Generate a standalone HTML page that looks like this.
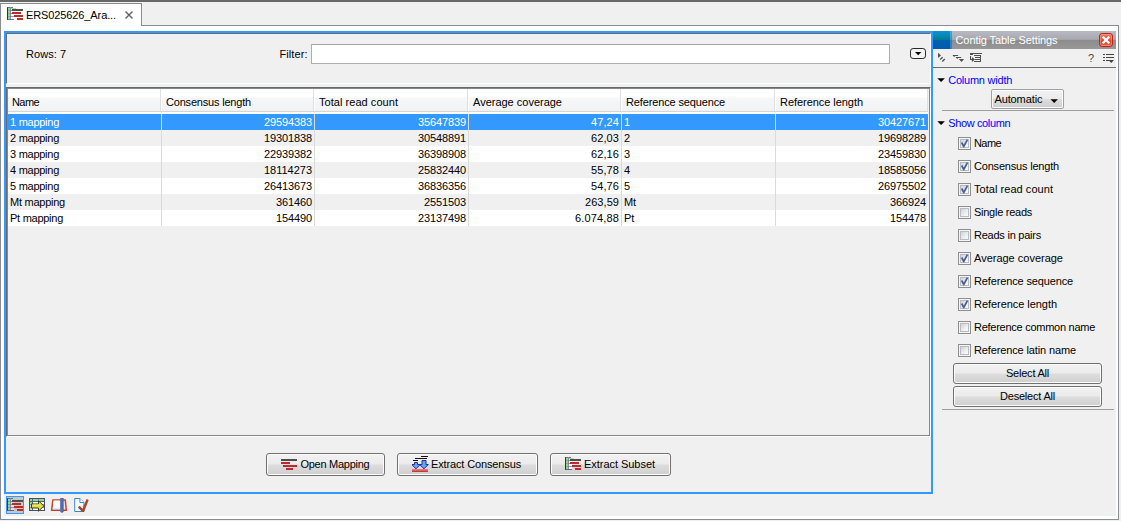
<!DOCTYPE html>
<html>
<head>
<meta charset="utf-8">
<title>Contig Table</title>
<style>
html,body{margin:0;padding:0;}
body{width:1121px;height:521px;overflow:hidden;background:#f0f0f0;font-family:"Liberation Sans",sans-serif;font-size:11px;color:#000;position:relative;}
.a{position:absolute;}
.t{position:absolute;white-space:pre;line-height:13px;height:13px;letter-spacing:-0.2px;}
#topbar{left:0;top:0;width:1121px;height:2px;background:#696969;}
#content{left:0;top:25px;width:1119px;height:495px;background:#fff;border:1px solid #898c95;box-sizing:border-box;}
#tab{left:0;top:3px;width:142px;height:23px;background:#fff;border:1px solid #898c95;border-bottom:none;box-sizing:border-box;}
#main{left:4px;top:31px;width:929px;height:463px;border:2px solid #3399ff;box-sizing:border-box;background:#f0f0f0;}
#tool{left:4px;top:494px;width:1112px;height:22px;background:#f0f0f0;}
#side{left:933px;top:31px;width:183px;height:463px;background:#f0f0f0;}
#toppanel{left:6px;top:33px;width:925px;height:51px;box-sizing:border-box;border-left:1px solid #696969;border-top:1px solid #696969;border-right:1px solid #fff;border-bottom:1px solid #fff;}
#filter{left:311px;top:44px;width:579px;height:20px;box-sizing:border-box;border:1px solid #abadb3;border-top-color:#a0a3aa;background:#fff;}
#tbl{left:6px;top:87px;width:925px;height:350px;box-sizing:border-box;border-left:1px solid #696969;border-top:1px solid #696969;border-right:1px solid #fff;border-bottom:1px solid #fff;background:#f0f0f0;}
#tbl2{left:7px;top:88px;width:923px;height:348px;box-sizing:border-box;border:1px solid #828790;}
#hdr{left:8px;top:89px;width:920px;height:25px;background:linear-gradient(#fff 0,#fff 8px,#f6f7f9 9px,#f2f3f5 21px,#f0f0f0 22px,#d5d5d5 22px,#d5d5d5 23px,#fff 23px,#fff 25px);}
.hs{position:absolute;top:89px;width:2px;height:22px;background:linear-gradient(90deg,#dedfe1 0,#dedfe1 1px,#fff 1px);}
.row{position:absolute;left:8px;width:920px;height:16px;background:#fff;}
.row.alt{background:#f0f0f0;}
.row.sel{background:#3399ff;color:#fff;}
.c{position:absolute;top:2px;line-height:13px;white-space:pre;letter-spacing:-0.15px;}
.r{text-align:right;}
.vs{position:absolute;top:114px;width:1px;height:112px;background:#dadada;}
.btn{position:absolute;box-sizing:border-box;border:1px solid #707070;border-radius:3px;background:linear-gradient(#f2f2f2 0,#ebebeb 48%,#dddddd 52%,#cfcfcf 100%);box-shadow:inset 0 0 0 1px #fcfcfc;}
.cb{position:absolute;left:958px;width:13px;height:13px;box-sizing:border-box;border:1px solid #8e8f8f;background:#f4f4f4;}
.cb i{position:absolute;left:1px;top:1px;width:9px;height:9px;border:1px solid #b8bcc2;box-sizing:border-box;background:linear-gradient(135deg,#cfd3d8,#f3f3f3 70%,#fafafa);}
.cb svg{position:absolute;left:0;top:0;}
.blue{color:#0000ff;}
</style>
</head>
<body>
<div class="a" id="topbar"></div>
<div class="a" id="content"></div>
<div class="a" id="tab"></div>
<svg class="a" style="left:7px;top:6px" width="16" height="16" viewBox="0 0 16 16" shape-rendering="crispEdges">
<rect x="1" y="2" width="6" height="11" fill="#fff" opacity="0.9"/>
<rect x="0" y="1" width="1" height="13" fill="#2c2c6c"/><rect x="0" y="1" width="6" height="1" fill="#4a4a88" opacity="0.8"/>
<rect x="3" y="1" width="1" height="13" fill="#8c8cb8"/>
<rect x="1" y="4" width="6" height="1" fill="#6a6a9c" opacity="0.7"/><rect x="1" y="7" width="6" height="1" fill="#6a6a9c" opacity="0.7"/><rect x="1" y="10" width="6" height="1" fill="#6a6a9c" opacity="0.7"/><rect x="0" y="13" width="7" height="1" fill="#4a4a88" opacity="0.8"/>
<rect x="1" y="2" width="2" height="2" fill="#86e660"/><rect x="1" y="5" width="2" height="2" fill="#86e660"/><rect x="1" y="8" width="2" height="2" fill="#86e660"/><rect x="1" y="11" width="2" height="2" fill="#86e660"/>
<rect x="4" y="2" width="5" height="1" fill="#9be87c"/>
<rect x="5" y="3" width="11" height="2" fill="#4d4d4d"/>
<rect x="5" y="6" width="9" height="2" fill="#bc2a2e"/>
<rect x="7" y="9" width="9" height="2" fill="#bc2a2e"/>
<rect x="10" y="12" width="6" height="2" fill="#bc2a2e"/>
</svg>
<div class="t" style="left:26px;top:9px;letter-spacing:-0.108px">ERS025626_Ara...</div>
<svg class="a" style="left:124px;top:10px" width="10" height="10" viewBox="0 0 10 10"><path d="M1.5 1.5L8.5 8.5M8.5 1.5L1.5 8.5" stroke="#606060" stroke-width="1.4" fill="none"/></svg>

<div class="a" id="main"></div>
<div class="a" id="side"></div>
<div class="a" id="tool"></div>

<div class="a" id="toppanel"></div>
<div class="t" style="left:26px;top:48px;letter-spacing:0.064px">Rows: 7</div>
<div class="t" style="left:279.4px;top:48px;letter-spacing:0.114px">Filter:</div>
<div class="a" id="filter"></div>
<svg class="a" style="left:909px;top:47px" width="18" height="13" viewBox="0 0 18 13"><rect x="1.5" y="1.5" width="15" height="10" rx="2.6" ry="2.6" fill="#f3f3f3" stroke="#2a2a2a" stroke-width="1"/><path d="M6 5h6.4l-3.2 3.2z" fill="#000"/></svg>

<div class="a" id="tbl"></div>
<div class="a" id="tbl2"></div>
<div class="a" id="hdr"></div>
<div class="hs" style="left:160px"></div>
<div class="hs" style="left:313px"></div>
<div class="hs" style="left:467px"></div>
<div class="hs" style="left:620px"></div>
<div class="hs" style="left:774px"></div>
<div class="hs" style="left:927px;width:1px"></div>
<div class="t" style="left:12px;top:96px;letter-spacing:-0.586px">Name</div>
<div class="t" style="left:166px;top:96px;letter-spacing:-0.191px">Consensus length</div>
<div class="t" style="left:319px;top:96px;letter-spacing:0.045px">Total read count</div>
<div class="t" style="left:473px;top:96px;letter-spacing:-0.006px">Average coverage</div>
<div class="t" style="left:626px;top:96px;letter-spacing:-0.14px">Reference sequence</div>
<div class="t" style="left:780px;top:96px;letter-spacing:-0.049px">Reference length</div>
<div class="row sel" style="top:114px"><span class="c" style="left:2px;letter-spacing:-0.264px">1 mapping</span><span class="c r" style="right:616px;letter-spacing:-0.119px">29594383</span><span class="c r" style="right:462px;letter-spacing:-0.119px">35647839</span><span class="c r" style="right:309px;letter-spacing:0.094px">47,24</span><span class="c" style="left:616px;letter-spacing:-0.125px">1</span><span class="c r" style="right:2px;letter-spacing:-0.119px">30427671</span></div>
<div class="row alt" style="top:130px"><span class="c" style="left:2px;letter-spacing:-0.264px">2 mapping</span><span class="c r" style="right:616px;letter-spacing:-0.119px">19301838</span><span class="c r" style="right:462px;letter-spacing:-0.119px">30548891</span><span class="c r" style="right:309px;letter-spacing:0.094px">62,03</span><span class="c" style="left:616px;letter-spacing:-0.125px">2</span><span class="c r" style="right:2px;letter-spacing:-0.119px">19698289</span></div>
<div class="row" style="top:146px"><span class="c" style="left:2px;letter-spacing:-0.264px">3 mapping</span><span class="c r" style="right:616px;letter-spacing:-0.119px">22939382</span><span class="c r" style="right:462px;letter-spacing:-0.119px">36398908</span><span class="c r" style="right:309px;letter-spacing:0.094px">62,16</span><span class="c" style="left:616px;letter-spacing:-0.125px">3</span><span class="c r" style="right:2px;letter-spacing:-0.119px">23459830</span></div>
<div class="row alt" style="top:162px"><span class="c" style="left:2px;letter-spacing:-0.264px">4 mapping</span><span class="c r" style="right:616px;letter-spacing:-0.016px">18114273</span><span class="c r" style="right:462px;letter-spacing:-0.119px">25832440</span><span class="c r" style="right:309px;letter-spacing:0.094px">55,78</span><span class="c" style="left:616px;letter-spacing:-0.125px">4</span><span class="c r" style="right:2px;letter-spacing:-0.119px">18585056</span></div>
<div class="row" style="top:178px"><span class="c" style="left:2px;letter-spacing:-0.264px">5 mapping</span><span class="c r" style="right:616px;letter-spacing:-0.119px">26413673</span><span class="c r" style="right:462px;letter-spacing:-0.119px">36836356</span><span class="c r" style="right:309px;letter-spacing:0.094px">54,76</span><span class="c" style="left:616px;letter-spacing:-0.125px">5</span><span class="c r" style="right:2px;letter-spacing:-0.119px">26975502</span></div>
<div class="row alt" style="top:194px"><span class="c" style="left:2px;letter-spacing:-0.248px">Mt mapping</span><span class="c r" style="right:616px;letter-spacing:-0.12px">361460</span><span class="c r" style="right:462px;letter-spacing:-0.118px">2551503</span><span class="c r" style="right:309px;letter-spacing:0.057px">263,59</span><span class="c" style="left:616px;letter-spacing:-0.117px">Mt</span><span class="c r" style="right:2px;letter-spacing:-0.12px">366924</span></div>
<div class="row" style="top:210px"><span class="c" style="left:2px;letter-spacing:-0.266px">Pt mapping</span><span class="c r" style="right:616px;letter-spacing:-0.12px">154490</span><span class="c r" style="right:462px;letter-spacing:-0.119px">23137498</span><span class="c r" style="right:309px;letter-spacing:0.146px">6.074,88</span><span class="c" style="left:616px;letter-spacing:-0.203px">Pt</span><span class="c r" style="right:2px;letter-spacing:-0.12px">154478</span></div>
<div class="vs" style="left:161px"></div>
<div class="vs" style="left:314px"></div>
<div class="vs" style="left:468px"></div>
<div class="vs" style="left:621px"></div>
<div class="vs" style="left:775px"></div>
<div class="btn" style="left:266px;top:453px;width:119px;height:23px"></div>
<div class="btn" style="left:397px;top:453px;width:141px;height:23px"></div>
<div class="btn" style="left:550px;top:453px;width:121px;height:23px"></div>
<div class="t" style="left:300.4px;top:458px;letter-spacing:-0.264px">Open Mapping</div>
<div class="t" style="left:431px;top:458px;letter-spacing:-0.137px">Extract Consensus</div>
<div class="t" style="left:584px;top:458px;letter-spacing:-0.039px">Extract Subset</div>
<svg class="a" style="left:281px;top:456px" width="16" height="16" viewBox="0 0 16 16" shape-rendering="crispEdges">
<rect x="0" y="3" width="16" height="2" fill="#4d4d4d"/><rect x="0" y="6" width="9" height="2" fill="#bc2a2e"/><rect x="2" y="9" width="14" height="2" fill="#bc2a2e"/><rect x="5" y="12" width="7" height="2" fill="#bc2a2e"/>
</svg>
<svg class="a" style="left:412px;top:455px" width="17" height="17" viewBox="0 0 17 17">
<g shape-rendering="crispEdges"><rect x="9" y="1" width="7" height="1" fill="#111"/><rect x="3" y="3" width="12" height="1" fill="#111"/><rect x="1" y="5" width="5" height="1" fill="#111"/>
<rect x="0" y="14" width="16" height="1" fill="#f07878"/><rect x="0" y="15" width="16" height="1" fill="#e05a5a"/><rect x="0" y="16" width="16" height="1" fill="#b84040"/></g>
<path d="M2.5 7.5h3v2h2.8l-4.3 4.3l-4.3-4.3h2.8z" fill="#5aa8f8" stroke="#2a2a98" stroke-width="1"/>
<path d="M10 5.5h4v4h2.3l-4.3 4.3l-4.3-4.3h2.3z" fill="#5aa8f8" stroke="#2a2a98" stroke-width="1"/>
</svg>
<svg class="a" style="left:565px;top:456px" width="16" height="16" viewBox="0 0 16 16" shape-rendering="crispEdges">
<rect x="1" y="2" width="6" height="11" fill="#fff" opacity="0.9"/>
<rect x="0" y="1" width="1" height="13" fill="#2c2c6c"/><rect x="0" y="1" width="6" height="1" fill="#4a4a88" opacity="0.8"/>
<rect x="3" y="1" width="1" height="13" fill="#8c8cb8"/>
<rect x="1" y="4" width="6" height="1" fill="#6a6a9c" opacity="0.7"/><rect x="1" y="7" width="6" height="1" fill="#6a6a9c" opacity="0.7"/><rect x="1" y="10" width="6" height="1" fill="#6a6a9c" opacity="0.7"/><rect x="0" y="13" width="7" height="1" fill="#4a4a88" opacity="0.8"/>
<rect x="1" y="2" width="2" height="2" fill="#86e660"/><rect x="1" y="5" width="2" height="2" fill="#86e660"/><rect x="1" y="8" width="2" height="2" fill="#86e660"/><rect x="1" y="11" width="2" height="2" fill="#86e660"/>
<rect x="4" y="2" width="5" height="1" fill="#9be87c"/>
<rect x="5" y="3" width="11" height="2" fill="#4d4d4d"/>
<rect x="5" y="6" width="9" height="2" fill="#bc2a2e"/>
<rect x="7" y="9" width="9" height="2" fill="#bc2a2e"/>
<rect x="10" y="12" width="6" height="2" fill="#bc2a2e"/>
</svg>
<div class="a" style="left:933px;top:31px;width:17px;height:18px;background:linear-gradient(#0a94d6 0,#0488b4 5px,#007c88 9px,#0060b2 9px,#005cac 18px)"></div>
<div class="a" style="left:950px;top:31px;width:1px;height:18px;background:linear-gradient(#48b0ec 0,#30a0c8 9px,#3088d8 9px,#2a80d0 18px)"></div>
<div class="a" style="left:951px;top:31px;width:165px;height:18px;background:linear-gradient(#babac6 0,#a8a8ae 8px,#a0a0a4 9px,#8c8c8c 9px,#989898 18px)"></div>
<div class="a" style="left:951px;top:31px;width:1px;height:18px;background:linear-gradient(#8a8a92 0,#7c7c80 9px,#6c6c6c 9px,#747474 18px)"></div>
<div class="t" style="left:955.5px;top:34px;color:#fff;letter-spacing:-0.084px">Contig Table Settings</div>
<div class="a" style="left:1099px;top:33px;width:14px;height:14px;border-radius:3px;background:linear-gradient(#ec7c6a 0,#e4513e 6px,#dc3a28 7px,#ea6450 12px);box-sizing:border-box;border:1px solid #c02414;box-shadow:inset 0 0 0 1px rgba(255,170,150,0.55)"></div>
<svg class="a" style="left:1101px;top:35px" width="10" height="10" viewBox="0 0 10 10"><path d="M1.7 1.7L8.3 8.3M8.3 1.7L1.7 8.3" stroke="#fff" stroke-width="2.3" fill="none"/></svg>
<div class="a" style="left:933px;top:67px;width:183px;height:1px;background:#6e6e6e"></div>
<svg class="a" style="left:936px;top:51px" width="50" height="14" viewBox="0 0 50 14">
<g fill="#505050">
<path d="M2 1.8v5.1l3-2.5z"/>
<path d="M16.8 4h5.3v1h-3l-0.9 1.1l-0.9-1.1h-0.5z"/><path d="M19.9 6h5.3v1h-3l-0.9 1.1l-0.9-1.1h-0.5z"/><path d="M22.9 8.1h5.2l-2.6 2.9z"/>
</g>
<g stroke="#505050" stroke-width="1.35" fill="none"><path d="M4.2 8.6l2.4-2.4"/><path d="M6.3 10.6l2.5-2.5"/></g>
<g fill="#505050" shape-rendering="crispEdges"><rect x="34" y="2" width="12" height="1"/><rect x="34" y="3" width="3" height="1"/><rect x="38" y="4" width="7" height="1"/><rect x="39" y="6" width="6" height="1"/><rect x="39" y="8" width="6" height="1"/><rect x="38" y="10" width="7" height="1"/><rect x="44" y="4" width="1" height="7"/><rect x="34" y="5" width="1" height="4"/><rect x="34" y="8" width="3" height="1"/></g>
<path d="M35.9 6v5l3.1-2.5z" fill="#505050"/>
</svg>
<div class="t" style="left:1088px;top:52px;color:#484848;font-size:11px;letter-spacing:0px">?</div>
<svg class="a" style="left:1103px;top:53px" width="12" height="11" viewBox="0 0 12 11" shape-rendering="crispEdges">
<g fill="#444"><rect x="0" y="1" width="2" height="1"/><rect x="3" y="1" width="8" height="1"/><rect x="0" y="4" width="2" height="1"/><rect x="3" y="4" width="8" height="1"/><rect x="0" y="7" width="2" height="1"/><rect x="3" y="7" width="3" height="1"/></g>
<path d="M5.5 7h5.5l-2.75 3z" fill="#444" shape-rendering="auto"/>
</svg>

<svg class="a" style="left:937px;top:77px" width="9" height="6"><path d="M0.3 1.2h7.6l-3.8 3.8z" fill="#000"/></svg>
<div class="t blue" style="left:948.2px;top:74px;letter-spacing:-0.22px">Column width</div>
<div class="btn" style="left:991px;top:89px;width:73px;height:20px;border-color:#a0a0a8;border-radius:2px"></div>
<div class="t" style="left:994.4px;top:93px;letter-spacing:-0.102px">Automatic</div>
<svg class="a" style="left:1050px;top:99px" width="9" height="5"><path d="M0.5 0.3h7.4l-3.7 3.7z" fill="#000"/></svg>
<div class="a" style="left:942px;top:110px;width:172px;height:1px;background:#a0a0a0"></div>
<svg class="a" style="left:937px;top:120px" width="9" height="6"><path d="M0.3 1.2h7.6l-3.8 3.8z" fill="#000"/></svg>
<div class="t blue" style="left:948.2px;top:117px;letter-spacing:-0.368px">Show column</div>

<div class="cb" style="top:137px"><i></i><svg width="11" height="11" viewBox="0 0 11 11"><path d="M1.9 4.9l1.5-0.9l1.4 2.5l2.9-5.3l1.5 0.7l-4 7.6h-0.9z" fill="#4a5f97"/></svg></div><div class="t" style="left:974px;top:137px;letter-spacing:-0.586px">Name</div>
<div class="cb" style="top:160px"><i></i><svg width="11" height="11" viewBox="0 0 11 11"><path d="M1.9 4.9l1.5-0.9l1.4 2.5l2.9-5.3l1.5 0.7l-4 7.6h-0.9z" fill="#4a5f97"/></svg></div><div class="t" style="left:974px;top:160px;letter-spacing:-0.191px">Consensus length</div>
<div class="cb" style="top:183px"><i></i><svg width="11" height="11" viewBox="0 0 11 11"><path d="M1.9 4.9l1.5-0.9l1.4 2.5l2.9-5.3l1.5 0.7l-4 7.6h-0.9z" fill="#4a5f97"/></svg></div><div class="t" style="left:974px;top:183px;letter-spacing:0.045px">Total read count</div>
<div class="cb" style="top:206px"><i></i></div><div class="t" style="left:974px;top:206px;letter-spacing:-0.263px">Single reads</div>
<div class="cb" style="top:229px"><i></i></div><div class="t" style="left:974px;top:229px;letter-spacing:-0.238px">Reads in pairs</div>
<div class="cb" style="top:252px"><i></i><svg width="11" height="11" viewBox="0 0 11 11"><path d="M1.9 4.9l1.5-0.9l1.4 2.5l2.9-5.3l1.5 0.7l-4 7.6h-0.9z" fill="#4a5f97"/></svg></div><div class="t" style="left:974px;top:252px;letter-spacing:-0.006px">Average coverage</div>
<div class="cb" style="top:275px"><i></i><svg width="11" height="11" viewBox="0 0 11 11"><path d="M1.9 4.9l1.5-0.9l1.4 2.5l2.9-5.3l1.5 0.7l-4 7.6h-0.9z" fill="#4a5f97"/></svg></div><div class="t" style="left:974px;top:275px;letter-spacing:-0.14px">Reference sequence</div>
<div class="cb" style="top:298px"><i></i><svg width="11" height="11" viewBox="0 0 11 11"><path d="M1.9 4.9l1.5-0.9l1.4 2.5l2.9-5.3l1.5 0.7l-4 7.6h-0.9z" fill="#4a5f97"/></svg></div><div class="t" style="left:974px;top:298px;letter-spacing:-0.049px">Reference length</div>
<div class="cb" style="top:321px"><i></i></div><div class="t" style="left:974px;top:321px;letter-spacing:-0.265px">Reference common name</div>
<div class="cb" style="top:344px"><i></i></div><div class="t" style="left:974px;top:344px;letter-spacing:-0.128px">Reference latin name</div>
<div class="btn" style="left:953px;top:363px;width:149px;height:21px"></div>
<div class="t" style="left:953px;top:367px;width:149px;text-align:center;letter-spacing:-0.225px">Select All</div>
<div class="btn" style="left:953px;top:386px;width:149px;height:21px"></div>
<div class="t" style="left:953px;top:390px;width:149px;text-align:center;letter-spacing:-0.207px">Deselect All</div>
<div class="a" style="left:942px;top:409px;width:172px;height:1px;background:#a0a0a0"></div>

<div class="a" style="left:6px;top:496px;width:18px;height:18px;box-sizing:border-box;border:1px solid #3399ff;background:#c9c7c4"></div>
<svg class="a" style="left:7px;top:497px" width="16" height="16" viewBox="0 0 16 16" shape-rendering="crispEdges">
<rect x="1" y="2" width="6" height="11" fill="#fff" opacity="0.45"/>
<rect x="0" y="1" width="1" height="13" fill="#2c2c6c"/><rect x="0" y="1" width="6" height="1" fill="#4a4a88" opacity="0.8"/>
<rect x="3" y="1" width="1" height="13" fill="#8c8cb8"/>
<rect x="1" y="4" width="6" height="1" fill="#6a6a9c" opacity="0.7"/><rect x="1" y="7" width="6" height="1" fill="#6a6a9c" opacity="0.7"/><rect x="1" y="10" width="6" height="1" fill="#6a6a9c" opacity="0.7"/><rect x="0" y="13" width="7" height="1" fill="#4a4a88" opacity="0.8"/>
<rect x="1" y="2" width="2" height="2" fill="#86e660"/><rect x="1" y="5" width="2" height="2" fill="#86e660"/><rect x="1" y="8" width="2" height="2" fill="#86e660"/><rect x="1" y="11" width="2" height="2" fill="#86e660"/>
<rect x="4" y="2" width="5" height="1" fill="#9be87c"/>
<rect x="5" y="3" width="11" height="2" fill="#4d4d4d"/>
<rect x="5" y="6" width="9" height="2" fill="#bc2a2e"/>
<rect x="7" y="9" width="9" height="2" fill="#bc2a2e"/>
<rect x="10" y="12" width="6" height="2" fill="#bc2a2e"/>
</svg>
<svg class="a" style="left:29px;top:497px" width="17" height="16" viewBox="0 0 17 16">
<g shape-rendering="crispEdges"><rect x="0.5" y="1.5" width="15" height="12" fill="#f4f8ff" stroke="#4a4a7c" stroke-width="1"/>
<rect x="1" y="2" width="2" height="2" fill="#86e660"/><rect x="4" y="2" width="5" height="2" fill="#86e660"/><rect x="10" y="2" width="5" height="2" fill="#86e660"/>
<rect x="1" y="4" width="14" height="1" fill="#5a5a8c"/><rect x="3" y="2" width="1" height="11" fill="#5a5a8c"/><rect x="9" y="2" width="1" height="11" fill="#8a8ab0"/>
<rect x="1" y="5" width="2" height="2" fill="#86e660"/><rect x="1" y="8" width="2" height="2" fill="#b8eca0"/><rect x="1" y="11" width="2" height="2" fill="#b8eca0"/><rect x="1" y="7" width="14" height="1" fill="#8a8ab0"/><rect x="1" y="10" width="14" height="1" fill="#8a8ab0"/></g>
<path d="M2.5 7h7v-3.2l5.4 5.2l-5.4 5.2v-3.2h-7z" fill="#e6de3a" stroke="#34440c" stroke-width="1" stroke-linejoin="round"/>
<path d="M3.5 8h7" fill="none" stroke="#f6f29a" stroke-width="1"/>
</svg>
<svg class="a" style="left:50px;top:497px" width="18" height="17" viewBox="0 0 18 17">
<path d="M2.9 2.9H15.3L16.3 13.3H1.6Z" fill="#ecebf6" stroke="#c6432e" stroke-width="1.5" stroke-linejoin="round"/>
<path d="M3.6 3.5h5.9v8.2h-6.6z" fill="#fbfbfe"/>
<path d="M2.8 11.7h6.7v1h-6.9z" fill="#b9bdd6"/>
<path d="M1.2 13.2h15.5v0.8h-15.5z" fill="#c03c28"/>
<path d="M10.2 1h3.5v13.7l-1.75 1.3l-1.75-1.3z" fill="#5068a8"/>
<path d="M10.2 1h1v13.4h-1z" fill="#6e82b8"/>
</svg>
<svg class="a" style="left:73px;top:497px" width="17" height="17" viewBox="0 0 17 17">
<path d="M1.7 1.5H6.9L10.9 5.5V14.5H1.7Z" fill="#f6f8fc" stroke="#3b8bc7" stroke-width="1"/>
<path d="M6.9 1.5V5.5H10.9" fill="#fff" stroke="#3b8bc7" stroke-width="1"/>
<path d="M4.9 10.5L6.7 8.8L9.5 11.8L13.6 2L15.7 3L11 15.1H9.2Z" fill="#a6472c"/>
</svg>
</body>
</html>
